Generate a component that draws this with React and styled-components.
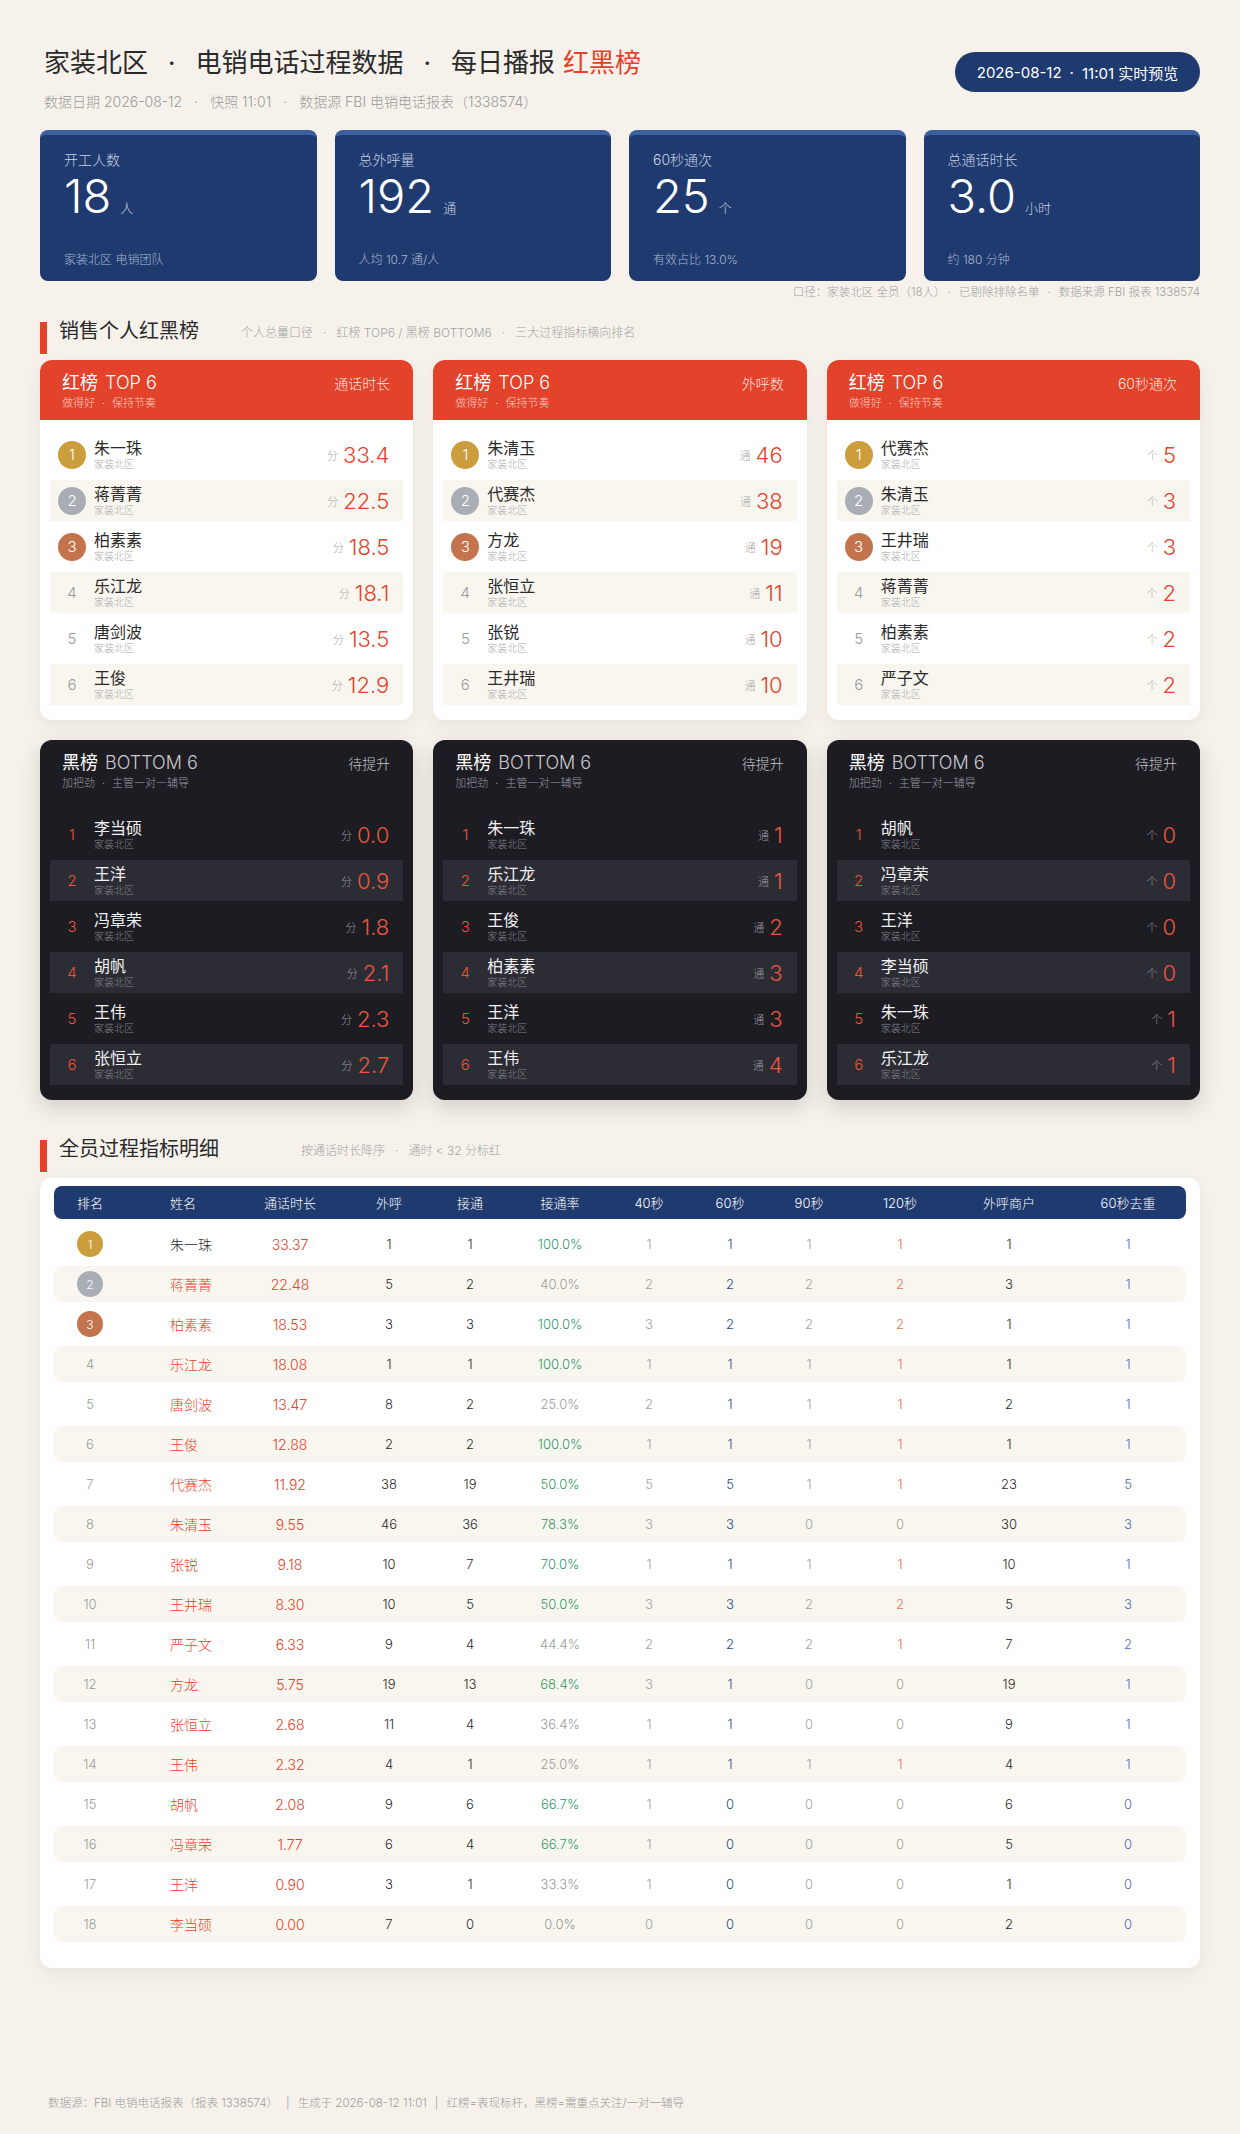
import React from 'react';
import styled, { createGlobalStyle } from 'styled-components';

const GlobalStyle = createGlobalStyle`
    body {
        margin: 0;
        background: #f6f2eb;
        font-family: Inter, "Noto Sans CJK SC", "Noto Sans", sans-serif;
        font-weight: 300;
        color: #2a2a2a;
    }
`

const Page = styled.div`
    min-height: 2134px;
    box-sizing: border-box;
    padding: 46px 40px 23px;
    display: flex;
    flex-direction: column;
`

const Header = styled.div`
    display: flex;
    justify-content: space-between;
    align-items: flex-start;
    padding-left: 4px;
`

const Title = styled.h1`
    margin: 0;
    font-size: 26px;
    line-height: 34px;
    font-weight: 400;
    color: #2a2a2a;
`

const Accent = styled.span`
    color: #e2432a;
    margin-left: 8px;
`

const Sep = styled.span`
    margin: 0 ${p => p.$gap || 10}px;
`

const SubLine = styled.div`
    margin-top: 13px;
    font-size: 14px;
    line-height: 18px;
    color: #9a9a9a;
`

const Pill = styled.div`
    margin-top: 6px;
    width: 245px;
    height: 40px;
    border-radius: 20px;
    background: #1f3a6e;
    color: #fff;
    font-size: 15px;
    font-weight: 400;
    display: flex;
    align-items: center;
    justify-content: center;
`

const KpiGrid = styled.div`
    margin-top: 19px;
    display: grid;
    grid-template-columns: repeat(4, 1fr);
    gap: 18px;
`

const Kpi = styled.div`
    height: 151px;
    box-sizing: border-box;
    background: #1f3a6e;
    border-top: 5px solid #3b5f9f;
    border-radius: 8px;
    padding: 15px 24px 12px;
    display: flex;
    flex-direction: column;
    color: #fff;
`

const KpiLabel = styled.div`
    font-size: 14px;
    line-height: 20px;
    color: #c9d2e6;
`

const KpiValue = styled.div`
    margin-top: 4px;
    display: flex;
    align-items: baseline;
    font-size: 47px;
    line-height: 44px;
    font-weight: 300;
`

const KpiUnit = styled.span`
    font-size: 13px;
    line-height: 16px;
    margin-left: 9px;
    color: #c9d2e6;
`

const KpiFoot = styled.div`
    margin-top: auto;
    font-size: 12px;
    line-height: 18px;
    color: #a9b6d1;
`

const Note = styled.div`
    margin-top: 3px;
    text-align: right;
    font-size: 11.5px;
    line-height: 16px;
    color: #a0a0a0;
`

const SectionHead = styled.div`
    margin-top: ${p => p.$top}px;
    height: 32px;
    box-sizing: border-box;
    border-left: 7px solid #e2432a;
    padding-left: 12px;
    display: flex;
    align-items: flex-start;
`

const SectionTitle = styled.h2`
    margin: -2px 0 0;
    font-size: 20px;
    line-height: 22px;
    font-weight: 400;
    color: #2a2a2a;
`

const SectionSub = styled.span`
    margin: 3px 0 0 ${p => p.$gap}px;
    font-size: 12px;
    line-height: 16px;
    color: #a3a3a3;
`

const BoardGrid = styled.div`
    margin-top: 6px;
    display: grid;
    grid-template-columns: repeat(3, 1fr);
    gap: 20px;
`

const Board = styled.div`
    border-radius: 12px;
    overflow: hidden;
    background: ${p => (p.$dark ? '#1d1c22' : '#ffffff')};
    box-shadow: ${p => (p.$dark ? '0 8px 22px rgba(40, 30, 20, 0.16)' : '0 6px 18px rgba(60, 40, 20, 0.07)')};
`

const BoardHead = styled.div`
    height: 60px;
    box-sizing: border-box;
    padding: 12px 23px 0 22px;
    display: flex;
    justify-content: space-between;
    align-items: flex-start;
    background: ${p => (p.$dark ? 'transparent' : '#e2432a')};
`

const BoardTitle = styled.div`
    font-size: 18px;
    line-height: 22px;
    font-weight: 400;
    color: #fff;

    span {
        margin-left: 7px;
        font-weight: 300;
        color: ${p => (p.$dark ? '#c9c9cf' : '#fff')};
    }
`

const BoardSub = styled.div`
    font-size: 11px;
    line-height: 16px;
    margin-top: 1px;
    color: ${p => (p.$dark ? '#9a9aa2' : 'rgba(255, 255, 255, 0.72)')};
`

const BoardMetric = styled.div`
    font-size: 14px;
    line-height: 22px;
    margin-top: 1px;
    color: ${p => (p.$dark ? '#c4c4ca' : 'rgba(255, 255, 255, 0.88)')};
`

const BoardList = styled.div`
    padding: 14px 10px 15px;
    display: flex;
    flex-direction: column;
    gap: 5px;
`

const BoardRow = styled.div`
    height: 41px;
    padding: 0 14px 0 8px;
    display: flex;
    align-items: center;
    background: ${p => (p.$alt ? (p.$dark ? '#2c2c34' : '#f9f6f0') : 'transparent')};
`

const Medal = styled.div`
    width: ${p => p.$size}px;
    height: ${p => p.$size}px;
    flex-shrink: 0;
    border-radius: 50%;
    display: flex;
    align-items: center;
    justify-content: center;
    font-size: ${p => (p.$size > 27 ? 15 : 12)}px;
    color: ${p => (p.$color ? '#fff' : p.$num)};
    background: ${p => p.$color || 'transparent'};
`

const Person = styled.div`
    margin-left: 8px;
    display: flex;
    flex-direction: column;
`

const PersonName = styled.div`
    font-size: 16px;
    line-height: 20px;
    font-weight: 400;
    color: ${p => (p.$dark ? '#f1f1f3' : '#2a2a2a')};
`

const PersonArea = styled.div`
    font-size: 10px;
    line-height: 13px;
    color: ${p => (p.$dark ? '#85858d' : '#aaaaaa')};
`

const Score = styled.div`
    margin-left: auto;
    display: flex;
    align-items: center;
`

const ScoreUnit = styled.span`
    font-size: 11px;
    margin-right: 5px;
    color: ${p => (p.$dark ? '#9a9aa2' : '#aaaaaa')};
`

const ScoreValue = styled.span`
    font-size: 22px;
    line-height: 26px;
    font-weight: 300;
    color: ${p => (p.$dark ? '#ea573d' : '#e2432a')};
`

const TableCard = styled.div`
    margin-top: 6px;
    background: #fff;
    border-radius: 12px;
    padding: 8px 14px 26px;
    box-shadow: 0 6px 18px rgba(60, 40, 20, 0.07);
`

const COLS = '72px 110px 108px 90px 72px 108px 70px 92px 66px 116px 102px 126px';

const TableHead = styled.div`
    display: grid;
    grid-template-columns: ${COLS};
    height: 33px;
    align-items: center;
    background: #1f3a6e;
    border-radius: 8px;
    color: #fff;
    font-size: 13px;
    margin-bottom: 7px;
`

const TableBody = styled.div`
    display: flex;
    flex-direction: column;
    gap: 4px;
`

const TableRow = styled.div`
    display: grid;
    grid-template-columns: ${COLS};
    height: 36px;
    align-items: center;
    border-radius: 8px;
    font-size: 13px;
    background: ${p => (p.$alt ? '#f9f6ef' : 'transparent')};
`

const Cell = styled.div`
    display: flex;
    justify-content: ${p => (p.$left ? 'flex-start' : 'center')};
    padding-left: ${p => p.$pad || 0}px;
    color: ${p => p.$color || '#2a2a2a'};
    font-size: ${p => p.$size || 13}px;
`

const Footer = styled.div`
    margin-top: auto;
    padding-left: 8px;
    font-size: 11.5px;
    line-height: 16px;
    color: #9c9c9c;
`

const MEDALS = ['#cc9d3c', '#a9aeb5', '#c4744c'];
const AREA = '家装北区';

const kpis = [
    { label: '开工人数', value: '18', unit: '人', foot: '家装北区 电销团队' },
    { label: '总外呼量', value: '192', unit: '通', foot: '人均 10.7 通/人' },
    { label: '60秒通次', value: '25', unit: '个', foot: '有效占比 13.0%' },
    { label: '总通话时长', value: '3.0', unit: '小时', foot: '约 180 分钟' },
];

const redBoards = [
    { metric: '通话时长', unit: '分', rows: [['朱一珠', '33.4'], ['蒋菁菁', '22.5'], ['柏素素', '18.5'], ['乐江龙', '18.1'], ['唐剑波', '13.5'], ['王俊', '12.9']] },
    { metric: '外呼数', unit: '通', rows: [['朱清玉', '46'], ['代赛杰', '38'], ['方龙', '19'], ['张恒立', '11'], ['张锐', '10'], ['王井瑞', '10']] },
    { metric: '60秒通次', unit: '个', rows: [['代赛杰', '5'], ['朱清玉', '3'], ['王井瑞', '3'], ['蒋菁菁', '2'], ['柏素素', '2'], ['严子文', '2']] },
];

const blackBoards = [
    { unit: '分', rows: [['李当硕', '0.0'], ['王洋', '0.9'], ['冯章荣', '1.8'], ['胡帆', '2.1'], ['王伟', '2.3'], ['张恒立', '2.7']] },
    { unit: '通', rows: [['朱一珠', '1'], ['乐江龙', '1'], ['王俊', '2'], ['柏素素', '3'], ['王洋', '3'], ['王伟', '4']] },
    { unit: '个', rows: [['胡帆', '0'], ['冯章荣', '0'], ['王洋', '0'], ['李当硕', '0'], ['朱一珠', '1'], ['乐江龙', '1']] },
];

// name, 通话时长, 外呼, 接通, 接通率, 40s, 60s, 90s, 120s, 外呼商户, 60s去重
const tableRows = [
    ['朱一珠', '33.37', 1, 1, 100.0, 1, 1, 1, 1, 1, 1],
    ['蒋菁菁', '22.48', 5, 2, 40.0, 2, 2, 2, 2, 3, 1],
    ['柏素素', '18.53', 3, 3, 100.0, 3, 2, 2, 2, 1, 1],
    ['乐江龙', '18.08', 1, 1, 100.0, 1, 1, 1, 1, 1, 1],
    ['唐剑波', '13.47', 8, 2, 25.0, 2, 1, 1, 1, 2, 1],
    ['王俊', '12.88', 2, 2, 100.0, 1, 1, 1, 1, 1, 1],
    ['代赛杰', '11.92', 38, 19, 50.0, 5, 5, 1, 1, 23, 5],
    ['朱清玉', '9.55', 46, 36, 78.3, 3, 3, 0, 0, 30, 3],
    ['张锐', '9.18', 10, 7, 70.0, 1, 1, 1, 1, 10, 1],
    ['王井瑞', '8.30', 10, 5, 50.0, 3, 3, 2, 2, 5, 3],
    ['严子文', '6.33', 9, 4, 44.4, 2, 2, 2, 1, 7, 2],
    ['方龙', '5.75', 19, 13, 68.4, 3, 1, 0, 0, 19, 1],
    ['张恒立', '2.68', 11, 4, 36.4, 1, 1, 0, 0, 9, 1],
    ['王伟', '2.32', 4, 1, 25.0, 1, 1, 1, 1, 4, 1],
    ['胡帆', '2.08', 9, 6, 66.7, 1, 0, 0, 0, 6, 0],
    ['冯章荣', '1.77', 6, 4, 66.7, 1, 0, 0, 0, 5, 0],
    ['王洋', '0.90', 3, 1, 33.3, 1, 0, 0, 0, 1, 0],
    ['李当硕', '0.00', 7, 0, 0.0, 0, 0, 0, 0, 2, 0],
];

const heads = ['排名', '姓名', '通话时长', '外呼', '接通', '接通率', '40秒', '60秒', '90秒', '120秒', '外呼商户', '60秒去重'];

const RankBoard = ({ dark, metric, unit, rows }) => (
    <Board $dark={dark}>
        <BoardHead $dark={dark}>
            <div>
                <BoardTitle $dark={dark}>
                    {dark ? '黑榜' : '红榜'}<span>{dark ? 'BOTTOM 6' : 'TOP 6'}</span>
                </BoardTitle>
                <BoardSub $dark={dark}>
                    {dark ? '加把劲' : '做得好'}<Sep $gap={7}>·</Sep>{dark ? '主管一对一辅导' : '保持节奏'}
                </BoardSub>
            </div>
            <BoardMetric $dark={dark}>{dark ? '待提升' : metric}</BoardMetric>
        </BoardHead>
        <BoardList>
            {rows.map(([name, val], i) => (
                <BoardRow key={name} $alt={i % 2 === 1} $dark={dark}>
                    <Medal
                        $size={28}
                        $color={!dark && i < 3 ? MEDALS[i] : null}
                        $num={dark ? '#e8553b' : '#9a9a9a'}
                    >
                        {i + 1}
                    </Medal>
                    <Person>
                        <PersonName $dark={dark}>{name}</PersonName>
                        <PersonArea $dark={dark}>{AREA}</PersonArea>
                    </Person>
                    <Score>
                        <ScoreUnit $dark={dark}>{unit}</ScoreUnit>
                        <ScoreValue $dark={dark}>{val}</ScoreValue>
                    </Score>
                </BoardRow>
            ))}
        </BoardList>
    </Board>
);

const DetailRow = ({ row, i }) => {
    const [name, dur, calls, conn, rate, s40, s60, s90, s120, shops, dedup] = row;
    const low = parseFloat(dur) < 32;
    return (
        <TableRow $alt={i % 2 === 1}>
            <Cell>
                {i < 3
                    ? <Medal $size={26} $color={MEDALS[i]}>{i + 1}</Medal>
                    : <Cell $color="#9a9a9a">{i + 1}</Cell>}
            </Cell>
            <Cell $left $pad={44} $size={14} $color={low ? '#e2432a' : '#2a2a2a'}>{name}</Cell>
            <Cell $color="#e2432a" $size={14}>{dur}</Cell>
            <Cell>{calls}</Cell>
            <Cell>{conn}</Cell>
            <Cell $color={rate >= 50 ? '#2a9a6a' : '#9a9a9a'}>{rate.toFixed(1)}%</Cell>
            <Cell $color="#a3a3a3">{s40}</Cell>
            <Cell $color="#2d4a85">{s60}</Cell>
            <Cell $color="#a3a3a3">{s90}</Cell>
            <Cell $color={s120 > 0 ? '#d4795a' : '#a3a3a3'}>{s120}</Cell>
            <Cell>{shops}</Cell>
            <Cell $pad={10} $color="#4a6fb0">{dedup}</Cell>
        </TableRow>
    );
};

const App = () => (
    <Page>
        <GlobalStyle />
        <Header>
            <div>
                <Title>
                    家装北区<Sep $gap={20}>·</Sep>电销电话过程数据<Sep $gap={20}>·</Sep>每日播报<Accent>红黑榜</Accent>
                </Title>
                <SubLine>
                    数据日期 2026-08-12<Sep $gap={12}>·</Sep>快照 11:01<Sep $gap={12}>·</Sep>数据源 FBI 电销电话报表（1338574）
                </SubLine>
            </div>
            <Pill>2026-08-12<Sep $gap={8}>·</Sep>11:01 实时预览</Pill>
        </Header>

        <KpiGrid>
            {kpis.map(k => (
                <Kpi key={k.label}>
                    <KpiLabel>{k.label}</KpiLabel>
                    <KpiValue>{k.value}<KpiUnit>{k.unit}</KpiUnit></KpiValue>
                    <KpiFoot>{k.foot}</KpiFoot>
                </Kpi>
            ))}
        </KpiGrid>
        <Note>
            口径：家装北区 全员（18人）<Sep $gap={8}>·</Sep>已剔除排除名单<Sep $gap={8}>·</Sep>数据来源 FBI 报表 1338574
        </Note>

        <SectionHead $top={22}>
            <SectionTitle>销售个人红黑榜</SectionTitle>
            <SectionSub $gap={42}>
                个人总量口径<Sep $gap={10}>·</Sep>红榜 TOP6 / 黑榜 BOTTOM6<Sep $gap={10}>·</Sep>三大过程指标横向排名
            </SectionSub>
        </SectionHead>
        <BoardGrid>
            {redBoards.map(b => <RankBoard key={b.metric} {...b} />)}
            {blackBoards.map(b => <RankBoard key={b.unit} dark {...b} />)}
        </BoardGrid>

        <SectionHead $top={40}>
            <SectionTitle>全员过程指标明细</SectionTitle>
            <SectionSub $gap={82}>
                按通话时长降序<Sep $gap={10}>·</Sep>通时 &lt; 32 分标红
            </SectionSub>
        </SectionHead>
        <TableCard>
            <TableHead>
                {heads.map((h, i) => (
                    <Cell key={h} $left={i === 1} $pad={i === 1 ? 44 : i === 11 ? 10 : 0} $color="#fff">{h}</Cell>
                ))}
            </TableHead>
            <TableBody>
                {tableRows.map((r, i) => <DetailRow key={r[0]} row={r} i={i} />)}
            </TableBody>
        </TableCard>

        <Footer>
            数据源：FBI 电销电话报表（报表 1338574）<Sep $gap={8}>|</Sep>生成于 2026-08-12 11:01<Sep $gap={8}>|</Sep>红榜=表现标杆，黑榜=需重点关注/一对一辅导
        </Footer>
    </Page>
);

export default App;
